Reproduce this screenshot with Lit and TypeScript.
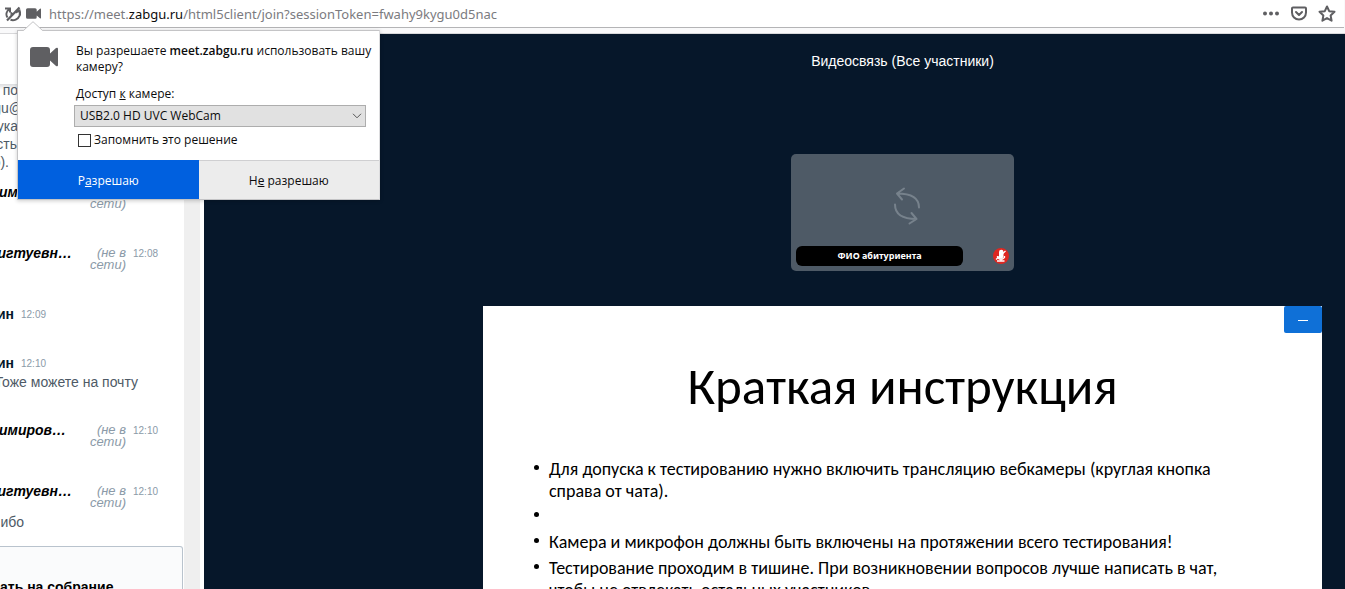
import { LitElement, html, css, svg } from "lit";
import { customElement } from "lit/decorators.js";

interface Line {
  text: string;
  end: number;
}

interface Message {
  name?: string;
  end?: number;
  time?: string;
  offline?: boolean;
  body: Line[];
}

const messages: Message[] = [
  {
    body: [
      { text: "по", end: 18 },
      { text: "gu@", end: 23 },
      { text: "ука", end: 18 },
      { text: "сть", end: 17 },
      { text: "о).", end: 9 },
    ],
  },
  { name: "имиров…", end: 66, offline: true, body: [] },
  { name: "игтуевн…", end: 72, time: "12:08", offline: true, body: [] },
  { name: "ин", end: 14, time: "12:09", body: [] },
  { name: "ин", end: 14, time: "12:10", body: [{ text: "Тоже можете на почту", end: 138 }, { text: "", end: 138 }] },
  { name: "имиров…", end: 66, time: "12:10", offline: true, body: [] },
  { name: "игтуевн…", end: 72, time: "12:10", offline: true, body: [{ text: "ибо", end: 24 }] },
];

const cameraShape = svg`<path d="M3 0h14a3 3 0 0 1 3 3v3.500l6-5.500q2-1 2 1v16q0 2-2 1l-6-5.500V17a3 3 0 0 1-3 3H3a3 3 0 0 1-3-3V3a3 3 0 0 1 3-3z"/>`;

@customElement("browser-bar")
class BrowserBar extends LitElement {
  static styles = css`
    :host {
      display: block;
      background: #f9f9fa;
      padding-bottom: 5px;
      border-bottom: 1px solid #d8d8da;
    }
    .bar {
      display: flex;
      align-items: center;
      height: 27px;
      padding-left: 5px;
      padding-right: 8px;
      margin-right: 1px;
      background: #fff;
      border-bottom: 1px solid #b4b4b6;
      font: 13px/20px "Noto Sans", sans-serif;
      color: #7b7b80;
    }
    .icon {
      display: grid;
      padding: 0;
      border: 0;
      background: none;
      color: #5f5f62;
    }
    .camera {
      margin-left: 5px;
      margin-right: 8px;
    }
    .address {
      flex: 1;
      min-width: 0;
      white-space: nowrap;
      overflow: hidden;
      color: inherit;
      text-decoration: none;
    }
    .host {
      color: #0c0c0d;
    }
    .actions {
      display: flex;
      gap: 11px;
    }
  `;
  render() {
    return html`<nav class="bar">
      <button class="icon" aria-label="Автовоспроизведение">
        <svg width="16" height="16" viewBox="0 0 16 16" fill="none" stroke="currentColor" stroke-width="2">
          <path d="M0 2.500h5v4M4.500 3C1.500 5 .5 8.500 2.500 11.500M5.500 13.800c3.500 1.200 7.500-.5 8.900-4 .7-1.900.5-3.700-.3-5.300M16 9.500l-1.500-5-4 2" />
          <path d="M5.500 5.500v4l3-2z" fill="currentColor" stroke="none" />
          <path d="M2 14.500 14.500 1.500" stroke-width="2.200" />
        </svg>
      </button>
      <button class="icon camera" aria-label="Камера">
        <svg width="15" height="11" viewBox="0 0 28 20" fill="currentColor">${cameraShape}</svg>
      </button>
      <a class="address" href="#">https://meet.<span class="host">zabgu.ru</span>/html5client/join?sessionToken=fwahy9kygu0d5nac</a>
      <div class="actions">
        <button class="icon" aria-label="Действия на странице">
          <svg width="18" height="18" viewBox="0 0 18 18" fill="currentColor">
            <circle cx="3" cy="8.500" r="2" /><circle cx="9" cy="8.500" r="2" /><circle cx="15" cy="8.500" r="2" />
          </svg>
        </button>
        <button class="icon" aria-label="Сохранить в Pocket">
          <svg width="16" height="18" viewBox="0 0 16 18" fill="none" stroke="currentColor" stroke-width="2" stroke-linecap="round" stroke-linejoin="round">
            <path d="M2 2.500h12a1 1 0 0 1 1 1v4a7 7 0 0 1-14 0v-4a1 1 0 0 1 1-1z" /><path d="m5 7 3 3 3-3" />
          </svg>
        </button>
        <button class="icon" aria-label="Добавить в закладки">
          <svg width="18" height="18" viewBox="0 0 18 18" fill="none" stroke="currentColor" stroke-width="2" stroke-linejoin="round">
            <path d="m9 1.500 2.200 4.700 5.300.6-3.900 3.600 1 5.300L9 13.100l-4.600 2.600 1-5.300L1.500 6.800l5.300-.6z" />
          </svg>
        </button>
      </div>
    </nav>`;
  }
}

@customElement("permission-popup")
class PermissionPopup extends LitElement {
  static styles = css`
    :host {
      display: block;
      position: absolute;
      left: 17px;
      top: 30px;
      width: 361px;
      border: 1px solid #c4c4c6;
      border-right-color: #dcdcde;
      background: #fff;
      box-shadow: 0 1px 4px rgba(0, 0, 0, 0.2);
      font: 12px/16px "Open Sans", "Noto Sans", sans-serif;
      color: #0c0c0d;
    }
    .arrow {
      position: absolute;
      left: 5px;
      top: -10px;
    }
    .content {
      display: grid;
      grid-template-columns: 28px 1fr;
      column-gap: 16px;
      padding: 12px 13px 12px 12px;
    }
    .camera {
      margin-top: 4px;
      fill: #5f5f62;
    }
    .question {
      margin: 0 -12px 11px 2px;
    }
    .site {
      font-weight: 600;
    }
    .label {
      display: block;
      margin: 0 0 3px 2px;
    }
    .field {
      display: grid;
      align-items: center;
    }
    .select,
    .chevron {
      grid-area: 1 / 1;
    }
    .select {
      appearance: none;
      height: 22px;
      padding: 0 5px;
      border: 1px solid #adadad;
      border-radius: 0;
      background: #e1e1e1;
      font: inherit;
      color: inherit;
    }
    .chevron {
      justify-self: end;
      margin-right: 4px;
      pointer-events: none;
    }
    .remember {
      display: flex;
      align-items: center;
      gap: 3px;
      margin: 5px 0 0 4px;
    }
    .tick {
      appearance: none;
      width: 13px;
      height: 13px;
      margin: 0;
      border: 1px solid #333;
      background: #fff;
    }
    .buttons {
      display: grid;
      grid-template-columns: 1fr 1fr;
    }
    .button {
      height: 39px;
      padding: 2px 0 0;
      border: 0;
      border-top: 1px solid #cfcfd1;
      background: #ececec;
      font: inherit;
      color: inherit;
    }
    .primary {
      border-top-color: #0060df;
      background: #0060df;
      color: #fff;
    }
  `;
  render() {
    return html`
      <svg class="arrow" width="20" height="11" viewBox="0 0 20 11">
        <path d="M0 10 10 .700 20 10v1H0z" fill="#fff" />
        <path d="M0 9.500h.5L10 .700l9.500 8.800h.5" fill="none" stroke="#c4c4c6" />
      </svg>
      <div class="content">
        <svg class="camera" width="28" height="20" viewBox="0 0 28 20">${cameraShape}</svg>
        <div>
          <p class="question">Вы разрешаете <b class="site">meet.zabgu.ru</b> использовать вашу камеру?</p>
          <label class="label" for="device">Доступ <u>к</u> камере:</label>
          <div class="field">
            <select class="select" id="device"><option>USB2.0 HD UVC WebCam</option></select>
            <svg class="chevron" width="10" height="6" viewBox="0 0 10 6" fill="none" stroke="#555"><path d="m1 .800 4 4 4-4" /></svg>
          </div>
          <label class="remember"><input class="tick" type="checkbox" />Запомнить это решение</label>
        </div>
      </div>
      <div class="buttons">
        <button class="button primary">Р<u>а</u>зрешаю</button>
        <button class="button">Н<u>е</u> разрешаю</button>
      </div>`;
  }
}

@customElement("chat-panel")
class ChatPanel extends LitElement {
  static styles = css`
    :host {
      display: flex;
      flex: 0 0 204px;
      min-height: 0;
      overflow: hidden;
      background: #fff;
      font: 14px/18px "Liberation Sans", Arial, sans-serif;
      color: #4e5a66;
    }
    .list {
      flex: 1;
      min-width: 0;
      padding-top: 47px;
      background: linear-gradient(#fff 50px, #dcdddf 50px, #fff 56px);
    }
    .message {
      padding-bottom: 15px;
    }
    .meta {
      display: flex;
      line-height: 12px;
      margin-bottom: 4px;
      color: #8b9aa8;
    }
    .name,
    .text {
      display: flex;
      justify-content: flex-end;
      white-space: nowrap;
    }
    .name {
      font-weight: bold;
      color: #06172a;
    }
    .lead {
      display: flex;
      justify-content: space-between;
      width: 126px;
    }
    .away {
      font-style: italic;
      color: #000;
    }
    .status {
      width: 42px;
      text-align: right;
      font-style: italic;
      font-size: 13px;
    }
    .time {
      height: 12px;
      margin-left: 7px;
      font-size: 10px;
      line-height: 14px;
    }
    .body {
      min-height: 18px;
    }
    .text {
      height: 18px;
    }
    .welcome {
      height: 60px;
      margin-right: 1px;
      padding-top: 31px;
      border: 1px solid #b9c3cd;
      border-left: 0;
      border-radius: 0 3px 0 0;
      background: #fafbfc;
      font-weight: bold;
      color: #000;
    }
    .scroll {
      width: 16px;
      margin-right: 4px;
      background: #efefef;
    }
  `;
  render() {
    return html`
      <div class="list">
        ${messages.map(
          (m) => html`<article class="message">
            ${m.name
              ? html`<div class="meta">
                  ${m.offline
                    ? html`<div class="lead">
                        <span class="name away" style="width:${m.end}px">${m.name}</span>
                        <span class="status">(не в сети)</span>
                      </div>`
                    : html`<span class="name" style="width:${m.end}px">${m.name}</span>`}
                  ${m.time ? html`<time class="time">${m.time}</time>` : ""}
                </div>`
              : ""}
            <div class="body">
              ${m.body.map((l) => html`<div class="text" style="width:${l.end}px">${l.text}</div>`)}
            </div>
          </article>`
        )}
        <div class="welcome">ать на собрание</div>
      </div>
      <div class="scroll"></div>`;
  }
}

@customElement("meeting-stage")
class MeetingStage extends LitElement {
  static styles = css`
    :host {
      display: flex;
      flex-direction: column;
      flex: 1;
      min-width: 0;
      padding: 18px 23px 0 279px;
      background: #06172a;
      color: #fff;
    }
    .title {
      margin: 0;
      text-align: center;
      font: 14px/18px "Liberation Sans", Arial, sans-serif;
    }
    .tile {
      display: flex;
      flex-direction: column;
      flex-shrink: 0;
      box-sizing: border-box;
      align-self: center;
      width: 223px;
      height: 117px;
      margin: 84px 0 35px;
      padding: 33px 5px 5px;
      border-radius: 5px;
      background: #4e5a66;
    }
    .spinner {
      align-self: center;
      margin-left: 8px;
    }
    .caption {
      display: flex;
      align-items: center;
      justify-content: space-between;
      margin-top: auto;
    }
    .person {
      width: 167px;
      border-radius: 6px;
      background: #000;
      text-align: center;
      font: bold 9px/20px "Noto Sans", sans-serif;
    }
    .slide {
      display: grid;
      flex: 1;
      grid-template-rows: max-content 1fr;
      align-content: start;
      background: #fff;
      color: #000;
      font: 18px/22px Carlito, Lato, sans-serif;
    }
    .minimize {
      display: grid;
      place-items: center;
      justify-self: end;
      width: 38px;
      height: 27px;
      padding: 2px 0 0;
      border: 0;
      border-radius: 2px;
      background: #0f70d7;
    }
    .heading {
      margin: 24px 0 41px;
      text-align: center;
      font-size: 51px;
      line-height: 60px;
      font-weight: normal;
    }
    .points {
      margin: 0;
      padding: 0 80px 0 66px;
      list-style: none;
    }
    .point {
      position: relative;
      min-height: 23px;
      margin-bottom: 3px;
    }
    .point::before {
      content: "";
      position: absolute;
      left: -15px;
      top: 7px;
      width: 5px;
      height: 5px;
      border-radius: 50%;
      background: #000;
    }
  `;
  render() {
    return html`
      <h2 class="title">Видеосвязь (Все участники)</h2>
      <div class="tile">
        <svg class="spinner" width="28" height="38" viewBox="0 0 28 38" fill="none" stroke="#77828c" stroke-width="2" stroke-linecap="round" stroke-linejoin="round">
          <path d="M11 1.500 4 6.500l5 6M4 6.500C17 6.500 26 10 26 20.500M2 17.500C2 28 11 32 23.500 32M18.500 26l5 6-7 4.500" />
        </svg>
        <div class="caption">
          <span class="person">ФИО абитуриента</span>
          <svg width="16" height="16" viewBox="0 0 16 16">
            <circle cx="8" cy="8" r="8" fill="#df2721" />
            <path d="M6 4a2 2 0 0 1 4.500 0v5L9 10.500H6z" fill="#fff" />
            <path d="M4.500 8v1.500l2 1.500h3l2-1.500V8M8 11v2M4 13h7.500M3 11.500 12.500 3" fill="none" stroke="#fff" stroke-width="1.300" />
          </svg>
        </div>
      </div>
      <section class="slide">
        <button class="minimize" aria-label="Свернуть">
          <svg width="10" height="1" viewBox="0 0 10 1"><path d="M0 0h10v1H0z" fill="#fff" /></svg>
        </button>
        <div>
          <h1 class="heading">Краткая инструкция</h1>
          <ul class="points">
            <li class="point">Для допуска к тестированию нужно включить трансляцию вебкамеры (круглая кнопка справа от чата).</li>
            <li class="point"></li>
            <li class="point">Камера и микрофон должны быть включены на протяжении всего тестирования!</li>
            <li class="point">Тестирование проходим в тишине. При возникновении вопросов лучше написать в чат, чтобы не отвлекать остальных участников.</li>
          </ul>
        </div>
      </section>`;
  }
}

@customElement("app-root")
class AppRoot extends LitElement {
  static styles = css`
    :host {
      display: flex;
      flex-direction: column;
      position: relative;
      height: 100vh;
      overflow: hidden;
      background: #fff;
    }
    .workspace {
      display: flex;
      flex: 1;
      min-height: 0;
    }
  `;
  render() {
    return html`<browser-bar></browser-bar>
      <main class="workspace"><chat-panel></chat-panel><meeting-stage></meeting-stage></main>
      <permission-popup></permission-popup>`;
  }
}
